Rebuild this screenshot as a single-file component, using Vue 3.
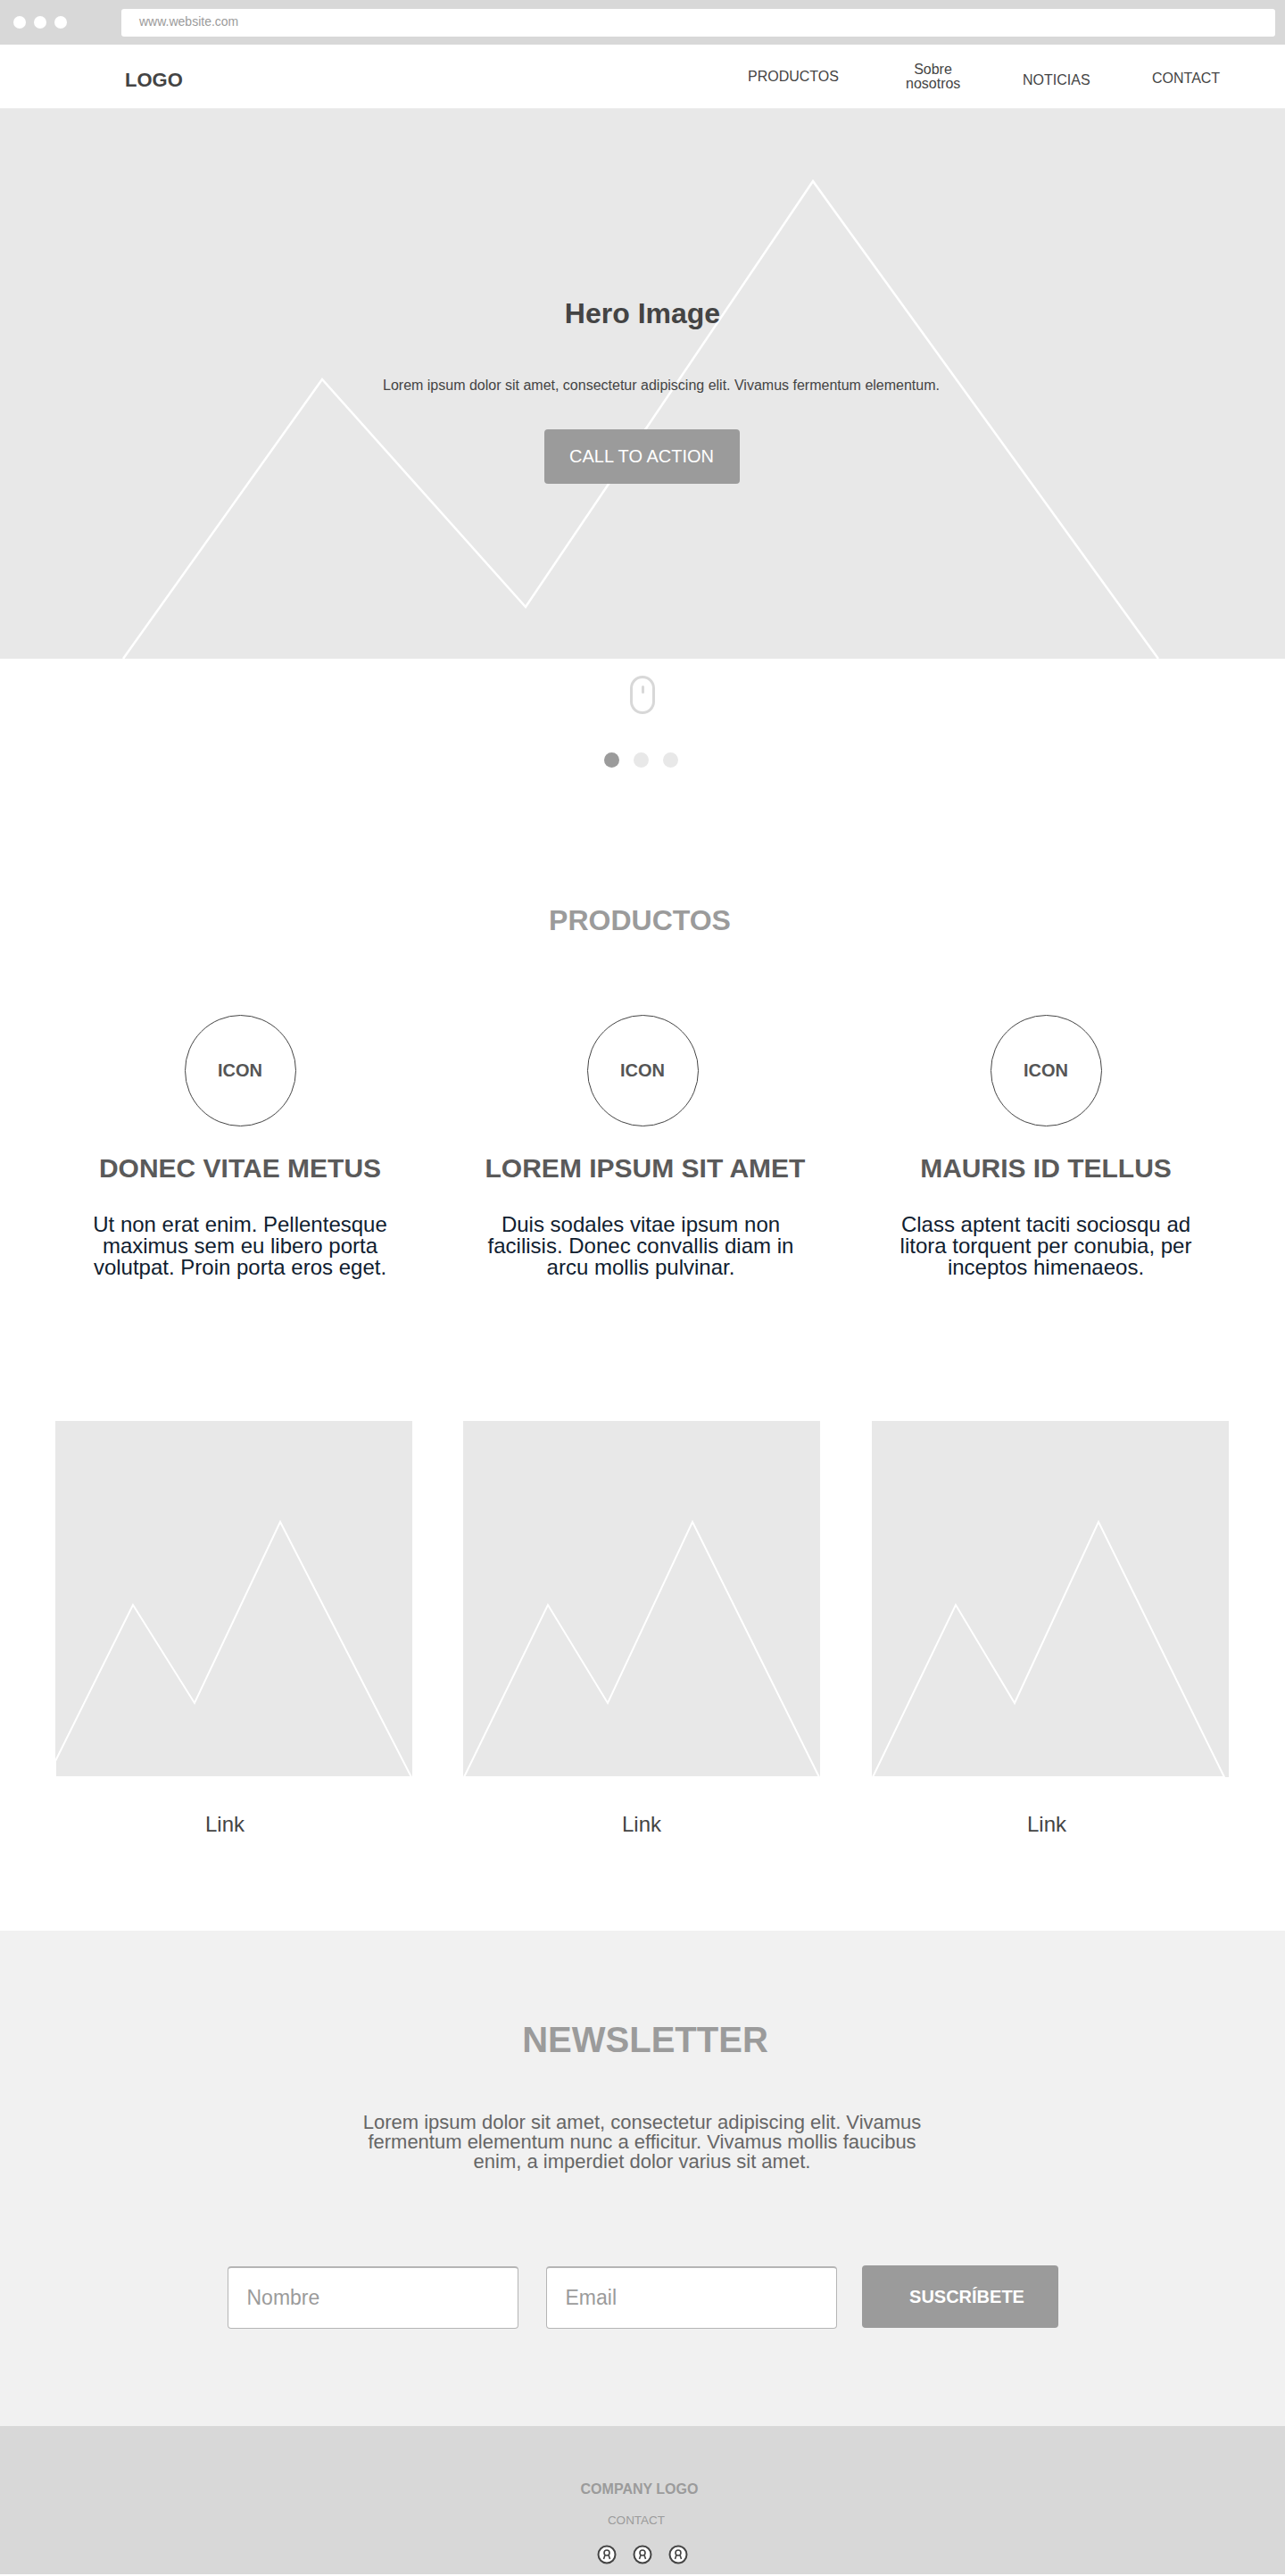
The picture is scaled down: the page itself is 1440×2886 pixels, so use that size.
<script setup>
const features = [
  {
    title: "DONEC VITAE METUS",
    text: ["Ut non erat enim. Pellentesque", "maximus sem eu libero porta", "volutpat. Proin porta eros eget."],
  },
  {
    title: "LOREM IPSUM SIT AMET",
    text: ["Duis sodales vitae ipsum non", "facilisis. Donec convallis diam in", "arcu mollis pulvinar."],
  },
  {
    title: "MAURIS ID TELLUS",
    text: ["Class aptent taciti sociosqu ad", "litora torquent per conubia, per", "inceptos himenaeos."],
  },
];

const cards = [
  { points: "0,381 87,206 156,316 252,113 399,399 0,399" },
  { points: "1,399 95,206 162,316 257,113 399,399" },
  { points: "1,399 94,206 160,316 254,113 395,399" },
];
</script>

<template>
  <div class="page">
    <div class="browser-bar">
      <div class="dots">
        <span class="dot"></span>
        <span class="dot"></span>
        <span class="dot"></span>
      </div>
      <div class="address">www.website.com</div>
    </div>

    <header class="nav">
      <div class="logo">LOGO</div>
      <a class="nav-link productos">PRODUCTOS</a>
      <a class="nav-link sobre">Sobre<br />nosotros</a>
      <a class="nav-link noticias">NOTICIAS</a>
      <a class="nav-link contact">CONTACT</a>
    </header>

    <section class="hero">
      <svg class="hero-lines" viewBox="0 0 1440 616">
        <polyline points="138,616 361,303 589,558 911,81 1298,616" fill="none" stroke="#fff" stroke-width="2.5" />
      </svg>
      <h1 class="hero-title">Hero Image</h1>
      <p class="hero-text">Lorem ipsum dolor sit amet, consectetur adipiscing elit. Vivamus fermentum elementum.</p>
      <button class="cta">CALL TO ACTION</button>
    </section>

    <div class="mouse"><span class="wheel"></span></div>

    <div class="pager">
      <span class="pager-dot active"></span>
      <span class="pager-dot"></span>
      <span class="pager-dot"></span>
    </div>

    <h2 class="section-title">PRODUCTOS</h2>

    <div class="features">
      <div v-for="(f, i) in features" :key="i" class="feature" :class="'feature-' + i">
        <div class="circle">ICON</div>
        <h3 class="feature-title">{{ f.title }}</h3>
        <p class="feature-text">
          <template v-for="line in f.text" :key="line">{{ line }}<br /></template>
        </p>
      </div>
    </div>

    <div class="cards">
      <div v-for="(c, i) in cards" :key="i" class="card" :class="'card-' + i">
        <svg class="card-image" viewBox="0 0 400 399">
          <polygon :points="c.points" fill="none" stroke="#fff" stroke-width="2" />
        </svg>
        <a class="card-link">Link</a>
      </div>
    </div>

    <section class="newsletter">
      <h2 class="news-title">NEWSLETTER</h2>
      <p class="news-text">
        Lorem ipsum dolor sit amet, consectetur adipiscing elit. Vivamus<br />
        fermentum elementum nunc a efficitur. Vivamus mollis faucibus<br />
        enim, a imperdiet dolor varius sit amet.
      </p>
      <form class="news-form" @submit.prevent>
        <input class="field" type="text" placeholder="Nombre" />
        <input class="field" type="text" placeholder="Email" />
        <button class="subscribe">SUSCRÍBETE</button>
      </form>
    </section>

    <footer class="footer">
      <div class="company">COMPANY LOGO</div>
      <div class="foot-contact">CONTACT</div>
      <div class="socials">
        <svg v-for="n in 3" :key="n" class="social" viewBox="0 0 22 22">
          <circle cx="11" cy="11" r="9.5" fill="#fff" stroke="#444" stroke-width="2" />
          <circle cx="11" cy="9" r="3" fill="none" stroke="#444" stroke-width="1.6" />
          <path d="M9 11.5 7.5 16M13 11.5 14.5 16" fill="none" stroke="#444" stroke-width="1.6" />
        </svg>
      </div>
    </footer>
  </div>
</template>

<style scoped>
.page {
  width: 1440px;
  height: 2886px;
  background: #fff;
  font-family: "Liberation Sans", Arial, sans-serif;
  overflow: hidden;
}

.browser-bar {
  height: 50px;
  background: #d8d8d8;
  display: flex;
  align-items: center;
  padding-left: 15px;
  box-sizing: border-box;
}

.dots {
  display: flex;
  gap: 9px;
  width: 121px;
}

.dot {
  width: 14px;
  height: 14px;
  border-radius: 50%;
  background: #fff;
}

.address {
  width: 1293px;
  height: 31px;
  background: #fff;
  border-radius: 3px;
  padding-left: 20px;
  box-sizing: border-box;
  line-height: 29px;
  font-size: 14px;
  color: #9b9b9b;
}

.nav {
  height: 72px;
  display: flex;
  border-bottom: 1px solid #eee;
  box-sizing: border-box;
}

.logo {
  margin: 27px 0 0 140px;
  width: 698px;
  font-size: 22px;
  line-height: 26px;
  font-weight: bold;
  color: #444;
}

.nav-link {
  font-size: 16px;
  line-height: 16px;
  color: #444;
}

.productos {
  margin-top: 28px;
  width: 177px;
}

.sobre {
  margin-top: 20px;
  width: 61px;
  padding-right: 70px;
  text-align: center;
}

.noticias {
  margin-top: 32px;
  width: 145px;
}

.contact {
  margin-top: 30px;
}

.hero {
  height: 616px;
  background: #e8e8e8;
  position: relative;
  display: flex;
  flex-direction: column;
  align-items: center;
}

.hero-lines {
  position: absolute;
  left: 0;
  top: 0;
  width: 1440px;
  height: 616px;
}

.hero-title {
  position: relative;
  margin: 211px 0 0;
  font-size: 32px;
  line-height: 36px;
  font-weight: bold;
  color: #444;
}

.hero-text {
  position: relative;
  margin: 53px 0 0 42px;
  font-size: 16px;
  line-height: 20px;
  color: #444;
}

.cta {
  position: relative;
  margin: 39px 2px 0 0;
  width: 219px;
  height: 61px;
  background: #9b9b9b;
  border: none;
  border-radius: 4px;
  color: #fff;
  font-family: inherit;
  font-size: 20px;
}

.mouse {
  width: 28px;
  height: 43px;
  margin: 19px auto 0;
  box-sizing: border-box;
  border: 3px solid #d8d8d8;
  border-radius: 14px;
  display: flex;
  justify-content: center;
  padding-top: 8px;
}

.wheel {
  width: 3px;
  height: 9px;
  border-radius: 2px;
  background: #d8d8d8;
}

.pager {
  margin: 43px 0 0 677px;
  display: flex;
  gap: 16px;
}

.pager-dot {
  width: 17px;
  height: 17px;
  border-radius: 50%;
  background: #e8e8e8;
}

.pager-dot.active {
  background: #9b9b9b;
}

.section-title {
  margin: 153px 0 0;
  padding-right: 6px;
  text-align: center;
  font-size: 32px;
  line-height: 36px;
  font-weight: bold;
  color: #9b9b9b;
}

.features {
  margin-top: 88px;
  height: 455px;
  display: flex;
}

.feature {
  width: 452px;
  display: flex;
  flex-direction: column;
  align-items: center;
  flex: none;
}

.feature-0 {
  margin-left: 43px;
}

.feature-1 {
  margin-left: -1px;
}

.feature-1 .feature-title {
  margin-left: 6px;
}

.feature-1 .feature-text {
  margin-right: 4px;
}

.circle {
  width: 125px;
  height: 125px;
  box-sizing: border-box;
  border: 1px solid #444;
  border-radius: 50%;
  display: flex;
  align-items: center;
  justify-content: center;
  font-size: 20px;
  font-weight: bold;
  color: #555;
}

.feature-title {
  margin: 29px 0 0;
  font-size: 30px;
  line-height: 36px;
  font-weight: bold;
  color: #5a5a5a;
  white-space: nowrap;
}

.feature-text {
  margin: 33px 0 0;
  font-size: 24px;
  line-height: 24px;
  color: #10202f;
  text-align: center;
  white-space: nowrap;
}

.cards {
  height: 571px;
  display: flex;
}

.card {
  width: 400px;
  flex: none;
  display: flex;
  flex-direction: column;
  align-items: center;
}

.card-0 {
  margin-left: 62px;
}

.card-1 {
  margin-left: 57px;
}

.card-2 {
  margin-left: 58px;
}

.card-image {
  display: block;
  width: 400px;
  height: 399px;
  background: #e8e8e8;
}

.card-link {
  margin-top: 39px;
  font-size: 24px;
  line-height: 28px;
  color: #444;
}

.card-0 .card-link {
  margin-right: 20px;
}

.card-2 .card-link {
  margin-right: 8px;
}

.newsletter {
  height: 555px;
  background: #f1f1f1;
  display: flex;
  flex-direction: column;
  align-items: center;
  padding-top: 98px;
  box-sizing: border-box;
}

.news-title {
  margin: 0 0 0 6px;
  font-size: 40px;
  line-height: 48px;
  font-weight: bold;
  color: #9b9b9b;
}

.news-text {
  margin: 58px 1px 0 0;
  font-size: 22px;
  line-height: 22px;
  color: #666;
  text-align: center;
}

.news-form {
  margin-top: 106px;
  display: flex;
  align-items: flex-start;
}

.field {
  width: 326px;
  height: 70px;
  box-sizing: border-box;
  border: 1px solid #b5b5b5;
  border-top-width: 2px;
  border-radius: 4px;
  background: #fff;
  padding: 0 21px;
  font-family: inherit;
  font-size: 23px;
  margin-right: 31px;
}

.field::placeholder {
  color: #9b9b9b;
  opacity: 1;
}

.field + .field {
  margin-right: 28px;
}

.subscribe {
  width: 220px;
  height: 70px;
  margin-top: -1px;
  padding-left: 22px;
  background: #9b9b9b;
  border: none;
  border-radius: 4px;
  color: #fff;
  font-family: inherit;
  font-size: 20px;
  font-weight: bold;
}

.footer {
  height: 166px;
  background: #d8d8d8;
  display: flex;
  flex-direction: column;
  align-items: center;
  padding-top: 62px;
  box-sizing: border-box;
}

.company {
  font-size: 16px;
  line-height: 18px;
  font-weight: bold;
  color: #9b9b9b;
  margin-right: 7px;
}

.foot-contact {
  margin-top: 18px;
  font-size: 13.5px;
  line-height: 16px;
  color: #9b9b9b;
  margin-right: 14px;
}

.socials {
  margin-top: 19px;
  display: flex;
  gap: 18px;
}

.social {
  width: 22px;
  height: 22px;
}
</style>
